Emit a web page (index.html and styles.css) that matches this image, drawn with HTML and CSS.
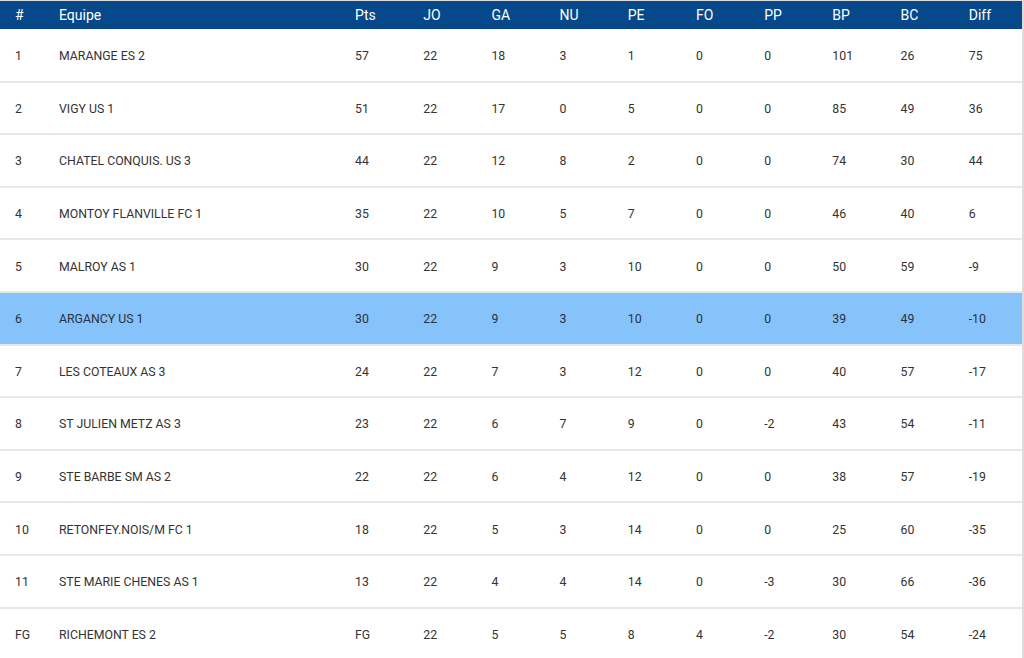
FILE: index.html
```html
<!DOCTYPE html>
<html lang="fr">
<head>
<meta charset="utf-8">
<title>Classement</title>
<link rel="stylesheet" href="styles.css">
</head>
<body>
<div class="wrap">
<table class="ranking">
<colgroup>
<col class="c-rank"><col class="c-team">
<col class="c-stat"><col class="c-stat"><col class="c-stat"><col class="c-stat"><col class="c-stat">
<col class="c-stat"><col class="c-stat"><col class="c-stat"><col class="c-stat"><col class="c-stat">
</colgroup>
<thead>
<tr><th>#</th><th>Equipe</th><th>Pts</th><th>JO</th><th>GA</th><th>NU</th><th>PE</th><th>FO</th><th>PP</th><th>BP</th><th>BC</th><th>Diff</th></tr>
</thead>
<tbody>
<tr><td>1</td><td>MARANGE ES 2</td><td>57</td><td>22</td><td>18</td><td>3</td><td>1</td><td>0</td><td>0</td><td>101</td><td>26</td><td>75</td></tr>
<tr><td>2</td><td>VIGY US 1</td><td>51</td><td>22</td><td>17</td><td>0</td><td>5</td><td>0</td><td>0</td><td>85</td><td>49</td><td>36</td></tr>
<tr><td>3</td><td>CHATEL CONQUIS. US 3</td><td>44</td><td>22</td><td>12</td><td>8</td><td>2</td><td>0</td><td>0</td><td>74</td><td>30</td><td>44</td></tr>
<tr><td>4</td><td>MONTOY FLANVILLE FC 1</td><td>35</td><td>22</td><td>10</td><td>5</td><td>7</td><td>0</td><td>0</td><td>46</td><td>40</td><td>6</td></tr>
<tr><td>5</td><td>MALROY AS 1</td><td>30</td><td>22</td><td>9</td><td>3</td><td>10</td><td>0</td><td>0</td><td>50</td><td>59</td><td>-9</td></tr>
<tr class="current"><td>6</td><td>ARGANCY US 1</td><td>30</td><td>22</td><td>9</td><td>3</td><td>10</td><td>0</td><td>0</td><td>39</td><td>49</td><td>-10</td></tr>
<tr><td>7</td><td>LES COTEAUX AS 3</td><td>24</td><td>22</td><td>7</td><td>3</td><td>12</td><td>0</td><td>0</td><td>40</td><td>57</td><td>-17</td></tr>
<tr><td>8</td><td>ST JULIEN METZ AS 3</td><td>23</td><td>22</td><td>6</td><td>7</td><td>9</td><td>0</td><td>-2</td><td>43</td><td>54</td><td>-11</td></tr>
<tr><td>9</td><td>STE BARBE SM AS 2</td><td>22</td><td>22</td><td>6</td><td>4</td><td>12</td><td>0</td><td>0</td><td>38</td><td>57</td><td>-19</td></tr>
<tr><td>10</td><td>RETONFEY.NOIS/M FC 1</td><td>18</td><td>22</td><td>5</td><td>3</td><td>14</td><td>0</td><td>0</td><td>25</td><td>60</td><td>-35</td></tr>
<tr><td>11</td><td>STE MARIE CHENES AS 1</td><td>13</td><td>22</td><td>4</td><td>4</td><td>14</td><td>0</td><td>-3</td><td>30</td><td>66</td><td>-36</td></tr>
<tr><td>FG</td><td>RICHEMONT ES 2</td><td>FG</td><td>22</td><td>5</td><td>5</td><td>8</td><td>4</td><td>-2</td><td>30</td><td>54</td><td>-24</td></tr>
</tbody>
</table>
</div>
</body>
</html>
```
FILE: styles.css
```css
html, body {
  margin: 0;
  padding: 0;
  background: #ffffff;
}
body {
  font-family: Roboto, "Liberation Sans", Arial, sans-serif;
  overflow: hidden;
}
.wrap {
  width: 1022px;
  border-top: 1px solid #dddddd;
  border-right: 2px solid #dcdcdc;
}
.ranking {
  width: 1022px;
  border-collapse: collapse;
  table-layout: fixed;
}
.c-rank { width: 44px; }
.c-team { width: 296px; }
.c-stat { width: 68.2px; }
.ranking th {
  background: #06488a;
  color: #ffffff;
  font-size: 14px;
  font-weight: 400;
  text-align: left;
  height: 28px;
  padding: 0 0 0 15px;
  vertical-align: middle;
}
.ranking td {
  font-size: 12.3px;
  color: #333333;
  text-align: left;
  height: 52.6px;
  padding: 2px 0 0 15px;
  box-sizing: border-box;
  vertical-align: middle;
  border-bottom: 2px solid #e8e8e8;
  white-space: nowrap;
}
.ranking tr.current td {
  background: #87c3fb;
  color: #2a3140;
}
```
